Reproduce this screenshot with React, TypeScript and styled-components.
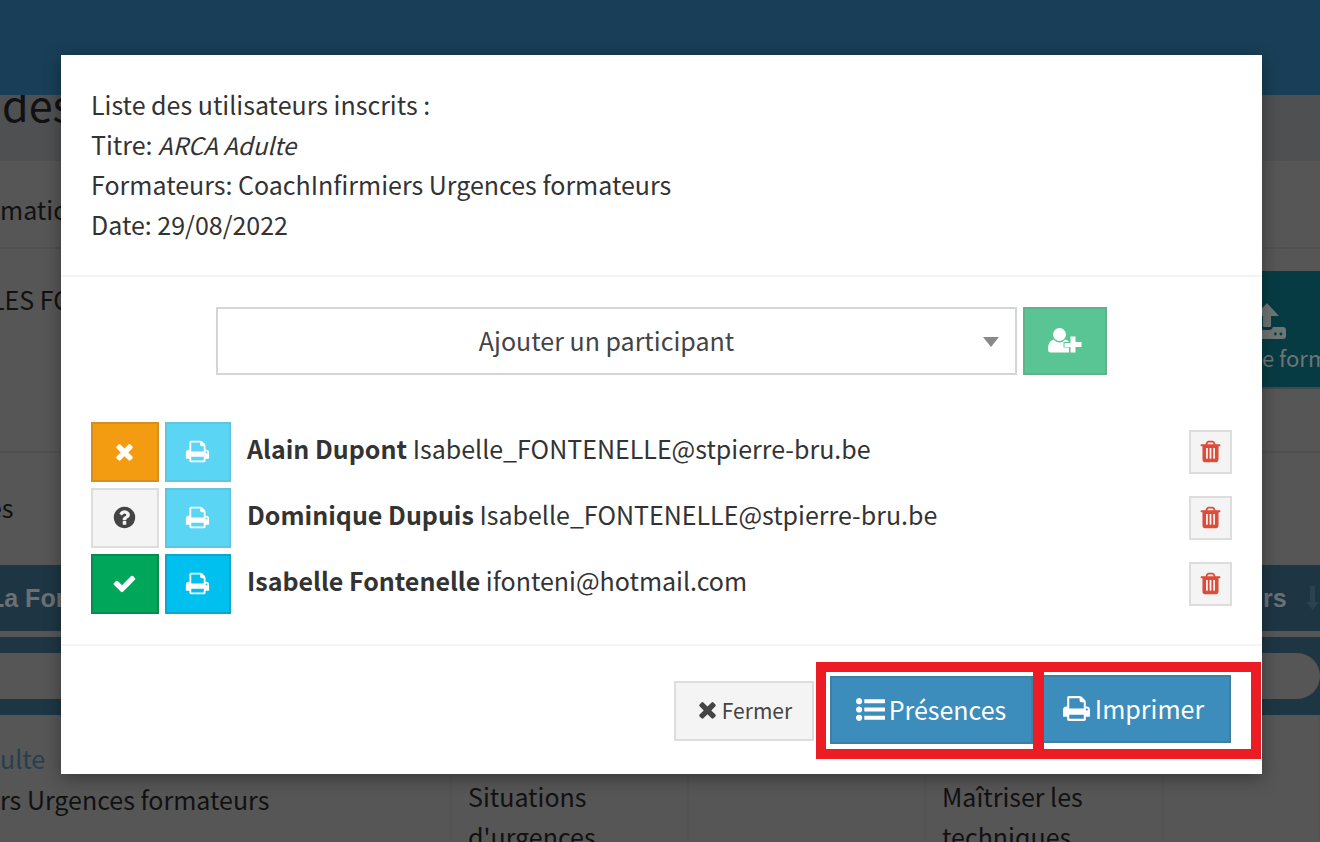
import React from 'react';
import styled, { createGlobalStyle, css } from 'styled-components';

const sans = '"Source Sans Pro", "Noto Sans CJK SC", "Noto Sans", sans-serif';

const Global = createGlobalStyle`
  *, *::before, *::after { box-sizing: border-box; }
  body { margin: 0; background: #565656; color: #111; font: 25px/40px ${sans}; }
  button, select, input { font-family: inherit; border-radius: 0; margin: 0; }
`;

/* ---------- icons ---------- */

const paths = {
  times:
    'M1490 1322q0 40-28 68l-136 136q-28 28-68 28t-68-28l-294-294-294 294q-28 28-68 28t-68-28l-136-136q-28-28-28-68t28-68l294-294-294-294q-28-28-28-68t28-68l136-136q28-28 68-28t68 28l294 294 294-294q28-28 68-28t68 28l136 136q28 28 28 68t-28 68l-294 294 294 294q28 28 28 68z',
  check:
    'M1671 566q0 40-28 68l-724 724-136 136q-28 28-68 28t-68-28l-136-136-362-362q-28-28-28-68t28-68l136-136q28-28 68-28t68 28l294 295 656-657q28-28 68-28t68 28l136 136q28 28 28 68z',
  question:
    'M1024 1376v-192q0-14-9-23t-23-9h-192q-14 0-23 9t-9 23v192q0 14 9 23t23 9h192q14 0 23-9t9-23zm256-672q0-88-55.5-163t-138.5-116-170-41q-243 0-371 213-15 24 8 42l132 100q7 6 19 6 16 0 25-12 53-68 86-92 34-24 86-24 48 0 85.5 26t37.5 59q0 38-20 61t-68 45q-63 28-115.5 86.5t-52.5 125.5v36q0 14 9 23t23 9h192q14 0 23-9t9-23q0-19 21.5-49.5t54.5-49.5q32-18 49-28.5t46-35 44.5-48 28-60.5 12.5-81zm384 192q0 209-103 385.5t-279.5 279.5-385.5 103-385.5-103-279.5-279.5-103-385.5 103-385.5 279.5-279.5 385.5-103 385.5 103 279.5 279.5 103 385.5z',
  print:
    'M448 1536h896v-256h-896v256zm0-640h896v-384h-160q-40 0-68-28t-28-68v-160h-640v640zm1152 64q0-26-19-45t-45-19-45 19-19 45 19 45 45 19 45-19 19-45zm128 0v416q0 13-9.5 22.5t-22.5 9.5h-224v160q0 40-28 68t-68 28h-960q-40 0-68-28t-28-68v-160h-224q-13 0-22.5-9.5t-9.5-22.5v-416q0-79 56.5-135.5t135.5-56.5h64v-544q0-40 28-68t68-28h672q40 0 88 20t76 48l152 152q28 28 48 76t20 88v256h64q79 0 135.5 56.5t56.5 135.5z',
  trash:
    'M704 1376v-704q0-14-9-23t-23-9h-64q-14 0-23 9t-9 23v704q0 14 9 23t23 9h64q14 0 23-9t9-23zm256 0v-704q0-14-9-23t-23-9h-64q-14 0-23 9t-9 23v704q0 14 9 23t23 9h64q14 0 23-9t9-23zm256 0v-704q0-14-9-23t-23-9h-64q-14 0-23 9t-9 23v704q0 14 9 23t23 9h64q14 0 23-9t9-23zm-544-992h448l-48-117q-7-9-17-11h-317q-10 2-17 11zm928 32v64q0 14-9 23t-23 9h-96v948q0 83-47 143.5t-113 60.5h-832q-66 0-113-58.5t-47-141.5v-952h-96q-14 0-23-9t-9-23v-64q0-14 9-23t23-9h309l70-167q15-37 54-63t79-26h320q40 0 79 26t54 63l70 167h309q14 0 23 9t9 23z',
  list:
    'M384 1408q0 80-56 136t-136 56-136-56-56-136 56-136 136-56 136 56 56 136zm0-512q0 80-56 136t-136 56-136-56-56-136 56-136 136-56 136 56 56 136zm1408 416v192q0 13-9.5 22.5t-22.5 9.5h-1216q-13 0-22.5-9.5t-9.5-22.5v-192q0-13 9.5-22.5t22.5-9.5h1216q13 0 22.5 9.5t9.5 22.5zm-1408-928q0 80-56 136t-136 56-136-56-56-136 56-136 136-56 136 56 56 136zm1408 416v192q0 13-9.5 22.5t-22.5 9.5h-1216q-13 0-22.5-9.5t-9.5-22.5v-192q0-13 9.5-22.5t22.5-9.5h1216q13 0 22.5 9.5t9.5 22.5zm0-512v192q0 13-9.5 22.5t-22.5 9.5h-1216q-13 0-22.5-9.5t-9.5-22.5v-192q0-13 9.5-22.5t22.5-9.5h1216q13 0 22.5 9.5t9.5 22.5z',
};

type IconName = keyof typeof paths;

const Glyph = styled.svg`
  display: block;
  flex: none;
  fill: currentColor;
`;

const Icon = ({ name, size = 25 }: { name: IconName; size?: number }) => (
  <Glyph width={size} height={size} viewBox="0 0 1792 1792" aria-hidden="true">
    <path d={paths[name]} />
  </Glyph>
);

const AddUserIcon = () => (
  <Glyph width={34} height={25} viewBox="0 0 34 25" aria-hidden="true">
    <ellipse cx="11.500" cy="6.500" rx="6.500" ry="6.500" />
    <path d="M5.500 11.500Q8 14.500 11.500 14.500T17.500 11.500Q20 12 21 14H15.500V19.500H21V24.500H3Q0 24.500 0 21.500Q0 13 5.500 11.500Z" />
    <path d="M22.500 8.500H27.500V14H33.500V19H27.500V24.500H22.500V19H16.500V15H22.500Z" />
  </Glyph>
);

const UploadIcon = () => (
  <Glyph width={38} height={38} viewBox="0 0 38 38" aria-hidden="true">
    <path d="M19 1L31 14H23V24Q23 25 22 25H16Q15 25 15 24V14H7Z" />
    <path
      fillRule="evenodd"
      d="M2 26H12Q13 28 16 28H21Q24 28 25 25H35Q38 25 38 28V34Q38 37 35 37H2Q0 37 0 34V28Q0 26 2 26ZM26 32a1.400 1.400 0 1 0 2.800 0a1.400 1.400 0 1 0-2.800 0M31.500 32a1.400 1.400 0 1 0 2.800 0a1.400 1.400 0 1 0-2.800 0"
    />
  </Glyph>
);

const SortIcon = () => (
  <Glyph width={28} height={28} viewBox="0 0 28 28" aria-hidden="true">
    <path d="M4 2H9V18H13L6.500 26L0 18H4ZM14 2H18V6H14ZM14 9H21V13H14ZM14 16H24V20H14Z" />
  </Glyph>
);

/* ---------- page behind the dialog ---------- */

const Page = styled.div`
  position: relative;
  height: 100vh;
  overflow: hidden;
`;

const TopBar = styled.header`
  height: 95px;
  background: #183f57;
`;

const TitleBand = styled.div`
  height: 66px;
  background: #4f5052;
  overflow: hidden;
`;

const PageTitle = styled.h1`
  margin: 0;
  padding-left: 2px;
  font-size: 43px;
  line-height: 16px;
  font-weight: 400;
`;

const BoxHeading = styled.div`
  height: 88px;
  padding-top: 28px;
  border-bottom: 2px solid #505050;
`;

const Toolbar = styled.div`
  display: flex;
  justify-content: space-between;
  height: 204px;
  padding-top: 22px;
  border-bottom: 2px solid #505050;
`;

const ToolbarLabel = styled.div`
  padding-top: 8px;
  margin-left: -9px;
`;

const ImportButton = styled.button`
  display: flex;
  flex-direction: column;
  align-items: flex-start;
  width: 120px;
  height: 118px;
  padding: 31px 0 0 48px;
  border: 0;
  border-bottom: 2px solid #3f4a4c;
  background: #073b43;
  color: #6f7474;
  font-size: 22px;
  line-height: 34px;
  white-space: nowrap;
  overflow: hidden;
`;

const ImportText = styled.span`
  padding-left: 14px;
`;

const Filter = styled.div`
  height: 112px;
  padding-top: 34px;
  margin-left: -12px;
`;

const GridHead = styled.div`
  display: flex;
  justify-content: space-between;
  align-items: center;
  height: 66px;
  background: #1e3644;
  color: #6b7073;
  font: bold 25px/40px "Liberation Sans", sans-serif;
`;

const HeadStart = styled.span`
  margin-left: -11px;
`;

const HeadEnd = styled.span`
  display: flex;
  align-items: center;
  width: 57px;
  gap: 19px;
  overflow: hidden;

  svg { color: #2b4350; }
`;

const FilterRow = styled.div`
  margin-top: 6px;
  padding: 16px 0;
  background: #1e3644;
`;

const FilterInput = styled.input`
  display: block;
  width: 100%;
  height: 46px;
  padding: 0 20px;
  border: 0;
  border-radius: 0 23px 23px 0;
  background: #565656;
`;

const GridRow = styled.div`
  display: grid;
  grid-template-columns: 452fr 237fr 237fr 238fr 156fr;
  height: 200px;
`;

const Cell = styled.div<{ $first?: boolean }>`
  padding: ${(p) => (p.$first ? '22px 0 0' : '61px 0 0 16px')};
  border-right: 2px solid #535353;
`;

const CourseLink = styled.a`
  display: block;
  color: #263f4f;
  line-height: 42px;
  text-decoration: none;
`;

/* ---------- dialog ---------- */

const Overlay = styled.div`
  position: absolute;
  inset: 0;
  padding: 55px 58px 0 61px;
`;

const Dialog = styled.section`
  background: #fff;
  color: #333;
  box-shadow: 0 4px 16px rgba(0, 0, 0, 0.35);
`;

const DialogHeader = styled.header`
  padding: 29px 30px 31px;
  border-bottom: 2px solid #f4f4f4;

  p { margin: 0; }
  em { font-size: 24px; line-height: 1; }
`;

const DialogBody = styled.div`
  padding: 30px;
`;

const AddForm = styled.form`
  display: flex;
  justify-content: center;
  gap: 6px;
  margin-bottom: 47px;
`;

const SelectBox = styled.div`
  position: relative;
  flex: 0 1 801px;

  svg {
    position: absolute;
    right: 18px;
    top: 30px;
    fill: #888;
    pointer-events: none;
  }
`;

const Select = styled.select`
  appearance: none;
  display: block;
  width: 100%;
  height: 68px;
  padding: 0 20px 2px 0;
  border: 2px solid #d2d6da;
  background: #fff;
  color: #444;
  font-size: 25px;
  text-align-last: center;
`;

type Tone = 'warning' | 'neutral' | 'success' | 'info' | 'infoSoft' | 'add' | 'primary' | 'danger';

const tones: Record<Tone, [string, string, string]> = {
  warning: ['#f39c12', '#d39020', '#fff'],
  neutral: ['#f4f4f4', '#dddddd', '#444'],
  success: ['#00a65a', '#0b8a50', '#fff'],
  info: ['#00c0ef', '#12a5cb', '#fff'],
  infoSoft: ['#5ad6f4', '#62c5de', '#fff'],
  add: ['#5ac594', '#62b18c', '#fff'],
  primary: ['#3c8dbc', '#407ea2', '#fff'],
  danger: ['#f4f4f4', '#dddddd', '#dd4b39'],
};

const Button = styled.button<{ $tone: Tone; $w: number; $h: number; $large?: boolean }>`
  display: flex;
  align-items: center;
  justify-content: center;
  flex: none;
  gap: ${(p) => (p.$large ? 4 : 2)}px;
  width: ${(p) => p.$w}px;
  height: ${(p) => p.$h}px;
  padding: 0 1px 2px 0;
  font-size: ${(p) => (p.$large ? 25 : 21)}px;
  line-height: 40px;
  cursor: pointer;
  ${({ $tone }) => css`
    background: ${tones[$tone][0]};
    border: 2px solid ${tones[$tone][1]};
    color: ${tones[$tone][2]};
  `}
`;

const People = styled.ul`
  display: flex;
  flex-direction: column;
  gap: 6px;
  margin: 0;
  padding: 0;
  list-style: none;
`;

const Person = styled.li`
  display: flex;
  align-items: center;
  gap: 6px;
`;

const PersonText = styled.span`
  flex: 1;
  padding: 0 0 8px 10px;
`;

const DialogFooter = styled.footer`
  display: flex;
  justify-content: flex-end;
  align-items: center;
  gap: 2px;
  padding: 16px 1px 15px 0;
  border-top: 2px solid #f4f4f4;
`;

const Highlight = styled.div`
  display: flex;
  border: 10px solid #ec1c24;
`;

/* The divider of the first cell covers the left edge of the button in the second. */
const HighlightCell = styled.div<{ $divided?: boolean }>`
  position: relative;
  ${(p) =>
    p.$divided
      ? css`
          z-index: 1;
          padding: 4px 0 5px 4px;
          border-right: 11px solid #ec1c24;
        `
      : css`
          padding: 3px 20px 6px 0;
          margin-left: -8px;
        `}
`;

interface Participant {
  name: string;
  email: string;
  tone: Tone;
  icon: IconName;
  status: string;
  printTone: Tone;
}

const participants: Participant[] = [
  { name: 'Alain Dupont', email: 'Isabelle_FONTENELLE@stpierre-bru.be', tone: 'warning', icon: 'times', status: 'Absent', printTone: 'infoSoft' },
  { name: 'Dominique Dupuis', email: 'Isabelle_FONTENELLE@stpierre-bru.be', tone: 'neutral', icon: 'question', status: 'Inconnu', printTone: 'infoSoft' },
  { name: 'Isabelle Fontenelle', email: 'ifonteni@hotmail.com', tone: 'success', icon: 'check', status: 'Présent', printTone: 'info' },
];

export default function App() {
  return (
    <Page>
      <Global />
      <TopBar />
      <TitleBand>
        <PageTitle>des</PageTitle>
      </TitleBand>
      <BoxHeading>matio</BoxHeading>
      <Toolbar>
        <ToolbarLabel>LES FO</ToolbarLabel>
        <ImportButton type="button">
          <UploadIcon />
          <ImportText>e form</ImportText>
        </ImportButton>
      </Toolbar>
      <Filter>es</Filter>
      <GridHead>
        <HeadStart>La For</HeadStart>
        <HeadEnd>
          rs
          <SortIcon />
        </HeadEnd>
      </GridHead>
      <FilterRow>
        <FilterInput aria-label="Filtrer" />
      </FilterRow>
      <GridRow>
        <Cell $first>
          <CourseLink href="#">ulte</CourseLink>
          rs Urgences formateurs
        </Cell>
        <Cell>
          Situations
          <br />
          d'urgences
        </Cell>
        <Cell />
        <Cell>
          Maîtriser les
          <br />
          techniques
        </Cell>
        <Cell />
      </GridRow>

      <Overlay>
        <Dialog role="dialog" aria-modal="true" aria-label="Liste des utilisateurs inscrits">
          <DialogHeader>
            <p>Liste des utilisateurs inscrits :</p>
            <p>
              Titre: <em>ARCA Adulte</em>
            </p>
            <p>Formateurs: CoachInfirmiers Urgences formateurs</p>
            <p>Date: 29/08/2022</p>
          </DialogHeader>
          <DialogBody>
            <AddForm onSubmit={(e) => e.preventDefault()}>
              <SelectBox>
                <Select aria-label="Ajouter un participant">
                  <option>Ajouter un participant</option>
                </Select>
                <svg width="16" height="10" viewBox="0 0 16 10" aria-hidden="true">
                  <path d="M0 0H16L8 10Z" />
                </svg>
              </SelectBox>
              <Button $tone="add" $w={84} $h={68} aria-label="Ajouter">
                <AddUserIcon />
              </Button>
            </AddForm>
            <People>
              {participants.map((p) => (
                <Person key={p.name}>
                  <Button type="button" $tone={p.tone} $w={68} $h={60} aria-label={p.status}>
                    <Icon name={p.icon} />
                  </Button>
                  <Button type="button" $tone={p.printTone} $w={66} $h={60} aria-label="Imprimer">
                    <Icon name="print" />
                  </Button>
                  <PersonText>
                    <strong>{p.name}</strong> {p.email}
                  </PersonText>
                  <Button type="button" $tone="danger" $w={43} $h={44} aria-label="Supprimer">
                    <Icon name="trash" />
                  </Button>
                </Person>
              ))}
            </People>
          </DialogBody>
          <DialogFooter>
            <Button type="button" $tone="neutral" $w={140} $h={60}>
              <Icon name="times" />
              Fermer
            </Button>
            <Highlight>
              <HighlightCell $divided>
                <Button type="button" $tone="primary" $w={203} $h={68} $large>
                  <Icon name="list" size={29} />
                  Présences
                </Button>
              </HighlightCell>
              <HighlightCell>
                <Button type="button" $tone="primary" $w={195} $h={68} $large>
                  <Icon name="print" size={29} />
                  Imprimer
                </Button>
              </HighlightCell>
            </Highlight>
          </DialogFooter>
        </Dialog>
      </Overlay>
    </Page>
  );
}
